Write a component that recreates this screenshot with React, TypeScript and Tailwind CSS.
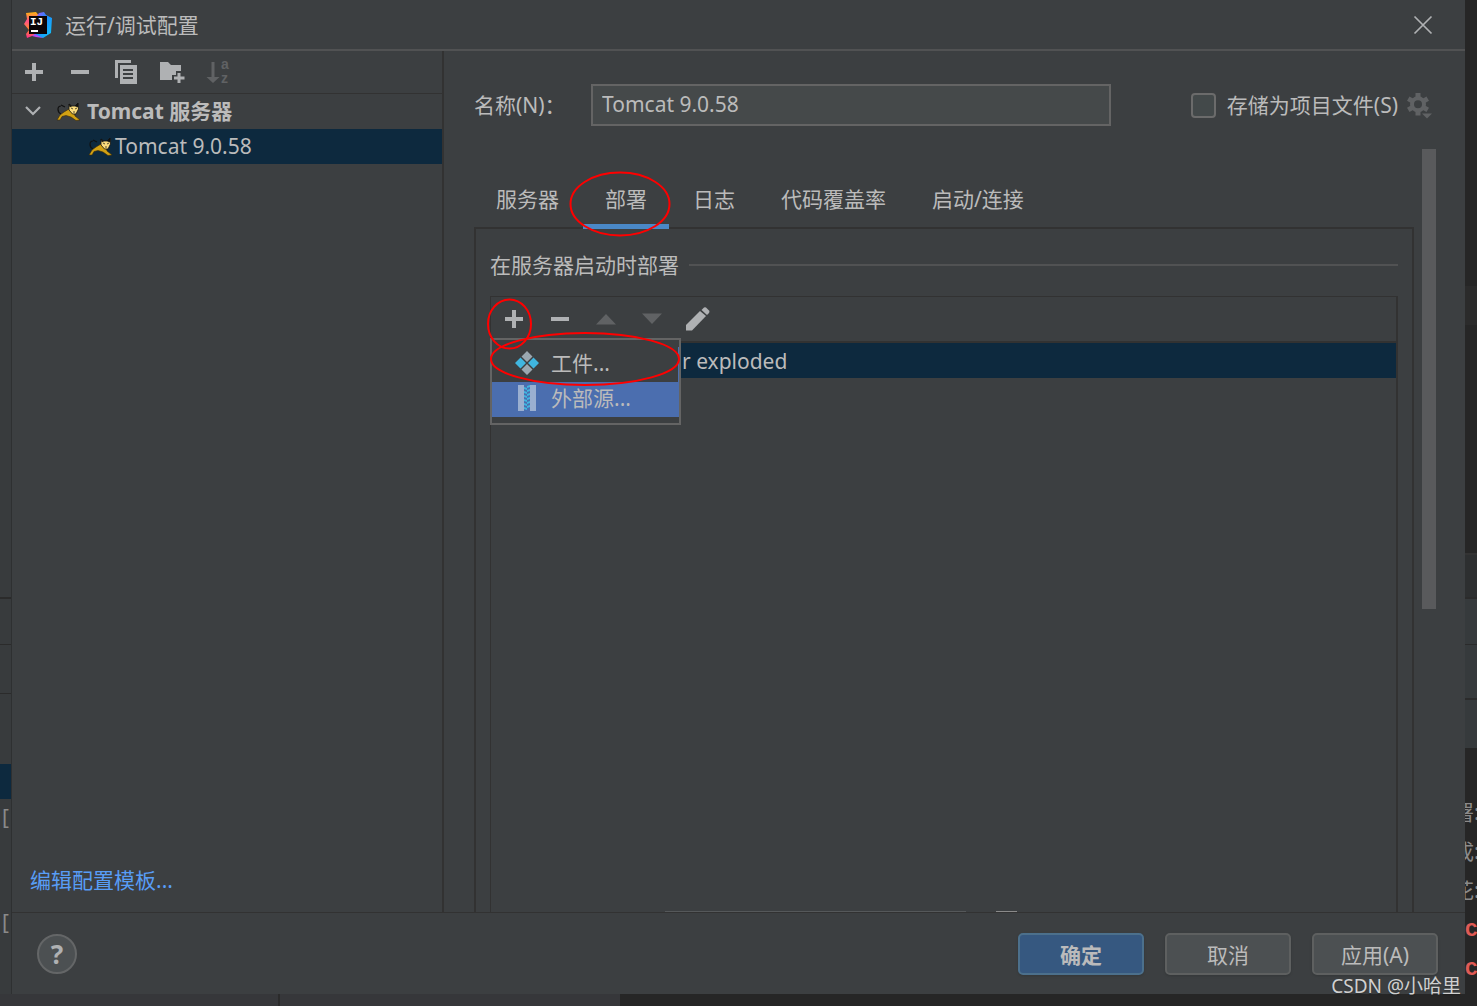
import { useState, type ReactNode } from "react";

const TABS = ["服务器", "部署", "日志", "代码覆盖率", "启动/连接"];

// editor window visible around the dialog
const RIGHT_BANDS = [
  { h: "h-[286px]", cls: "bg-[#262626]" },
  { h: "h-[39px]", cls: "bg-[#2b2b2b]" },
  { h: "h-[228px]", cls: "bg-[#262626]" },
  { h: "h-[44px]", cls: "bg-[#2d2f30] border-t-2 border-[#333333]" },
  { h: "h-[47px]", cls: "bg-[#363a3c] border-t-2 border-[#2b2b2b]" },
  { h: "h-[54px]", cls: "bg-[#363a3c] border-t border-[#2b2b2b]" },
  { h: "h-[50px]", cls: "bg-[#363a3c] border-t-2 border-[#2b2b2b]" },
];

const CONSOLE_LINES = ["署:", "成:", "花:"];

function IdeaLogo() {
  return (
    <svg width="30" height="30" viewBox="0 0 30 30" aria-hidden="true">
      <defs>
        <linearGradient id="warm" x1="0" y1="0" x2="0" y2="1">
          <stop offset="0" stopColor="#fdb60d" />
          <stop offset="0.35" stopColor="#ff4f8a" />
          <stop offset="0.65" stopColor="#ff8a2a" />
          <stop offset="1" stopColor="#fe2d8e" />
        </linearGradient>
        <linearGradient id="cool" x1="0" y1="0" x2="1" y2="1">
          <stop offset="0" stopColor="#b74af7" />
          <stop offset="0.45" stopColor="#1a8dff" />
          <stop offset="1" stopColor="#12c8f5" />
        </linearGradient>
      </defs>
      <path d="M3 3L13 2L17 7L14 25L9 26L4 28L3 24L6 20L1 14L4 9Z" fill="url(#warm)" />
      <path d="M14 6L16 3L21 2L23 5L29 8L28 23L20 28L11 25Z" fill="url(#cool)" />
      <path d="M9 26L12 24L20 28L13 27Z" fill="#b74af7" />
      <rect x="6" y="6" width="18" height="18" fill="#0a0508" />
      <text x="7" y="15" fontSize="11" fontWeight="700" fontFamily="Liberation Mono, monospace" fill="#fff">IJ</text>
      <path d="M8 20h7v2h-7z" fill="#fff" />
    </svg>
  );
}

function TomcatIcon() {
  return (
    <svg width="24" height="20" viewBox="0 0 24 20" className="shrink-0" aria-hidden="true">
      <path d="M5 13C1 11 1 5 5 5M5 4L9 6" fill="none" stroke="#111" strokeWidth="1.200" />
      <path d="M1 19L4 14L8 11L13 8L18 11L19 15L24 19L20 19.500L15 16L10 14.500L6 15.500L4 19Z" fill="#d2a113" stroke="#3c2c08" strokeWidth="0.600" />
      <path d="M13 3L15.500 5H19L22 2L22.500 8L20 13H16.500L13 9Z" fill="#fbdc7c" stroke="#111" strokeWidth="0.800" />
      <path d="M13 3L15.500 5L14 6ZM22 2L19 5L22 6ZM15 7L17 8M19 8L21 7M17 11H19" fill="#111" stroke="#111" strokeWidth="0.700" />
    </svg>
  );
}

function PlusIcon() {
  return (
    <svg width="18" height="18" viewBox="0 0 18 18" aria-hidden="true">
      <path d="M7 0h4v7h7v4h-7v7H7v-7H0V7h7z" fill="#afb1b3" />
    </svg>
  );
}

function MinusIcon() {
  return (
    <svg width="18" height="18" viewBox="0 0 18 18" aria-hidden="true">
      <path d="M0 7h18v4H0z" fill="#afb1b3" />
    </svg>
  );
}

function CopyIcon() {
  return (
    <svg width="24" height="24" viewBox="0 0 24 24" aria-hidden="true">
      <path d="M1 0H17V3H4V18H1Z" fill="#afb1b3" />
      <path d="M6 5H23V24H6ZM9 9V11H19V9ZM9 13V15H19V13ZM9 17V19H19V17Z" fill="#afb1b3" fillRule="evenodd" />
    </svg>
  );
}

function FolderPlusIcon() {
  return (
    <svg width="26" height="22" viewBox="0 0 26 22" aria-hidden="true">
      <path d="M1 1H9L12 4H22V10H17V14H13V19H1Z" fill="#afb1b3" />
      <path d="M18.500 12H21.500V15.500H25.500V18.500H21.500V22H18.500V18.500H15V15.500H18.500Z" fill="#afb1b3" />
    </svg>
  );
}

function SortIcon() {
  return (
    <svg width="24" height="28" viewBox="0 0 24 28" aria-hidden="true">
      <path d="M5.500 4h3v15h5L7 25L0.500 19h5z" fill="#606264" />
      <g fill="#606264" fontSize="14" fontWeight="700" fontFamily="Liberation Sans, sans-serif">
        <text x="15" y="11">a</text>
        <text x="15" y="25">z</text>
      </g>
    </svg>
  );
}

function PencilIcon() {
  return (
    <svg width="24" height="24" viewBox="0 0 24 24" aria-hidden="true">
      <path d="M0 18L14 4L20 9L6 23.500H0Z" fill="#afb1b3" />
      <path d="M15.500 3L18 0.500Q19 0 20 0.500L23 3.500Q24 4.500 23 6L21 8Z" fill="#afb1b3" />
    </svg>
  );
}

function GearIcon() {
  return (
    <svg width="26" height="26" viewBox="0 0 26 26" aria-hidden="true">
      <g fill="#606264">
        <path d="M8.500 0H13.500V5H8.500ZM8.500 17.500H13.500V22.500H8.500Z" />
        <path d="M8.500 0H13.500V5H8.500ZM8.500 17.500H13.500V22.500H8.500Z" transform="rotate(60 11 11.250)" />
        <path d="M8.500 0H13.500V5H8.500ZM8.500 17.500H13.500V22.500H8.500Z" transform="rotate(120 11 11.250)" />
        <path d="M15 20.500H25L20 25.500Z" />
      </g>
      <circle cx="11" cy="11.250" r="6" fill="none" stroke="#606264" strokeWidth="4" />
    </svg>
  );
}

function ArtifactIcon() {
  return (
    <svg width="24" height="24" viewBox="0 0 24 24" className="shrink-0" aria-hidden="true">
      <path d="M12 0L17.500 5.500L12 11L6.500 5.500ZM12 13L17.500 18.500L12 24L6.500 18.500Z" fill="#9aa7b0" />
      <path d="M5.500 6.500L11 12L5.500 17.500L0 12ZM18.500 6.500L24 12L18.500 17.500L13 12Z" fill="#40b6e0" />
    </svg>
  );
}

function ArchiveIcon() {
  return (
    <svg width="24" height="26" viewBox="0 0 24 26" className="shrink-0" aria-hidden="true">
      <path d="M3 0H9V26H3ZM15 0H21V26H15Z" fill="#9aafd0" />
      {[1, 5, 9, 13, 17, 21].map(y => (
        <path key={y} d={`M12 ${y}L15 ${y - 1}V${y + 1}L12 ${y + 2}ZM9 ${y + 1}L12 ${y + 2}V${y + 4}L9 ${y + 3}Z`} fill="#40b6e0" />
      ))}
    </svg>
  );
}

function ToolButton({ label, disabled, children }: { label: string; disabled?: boolean; children: ReactNode }) {
  return (
    <button type="button" aria-label={label} disabled={disabled} className="flex size-[30px] items-center justify-center">
      {children}
    </button>
  );
}

function TitleBar() {
  return (
    <header className="flex h-[51px] items-center border-b-2 border-[#515253] pr-8 pl-[11px]">
      <IdeaLogo />
      <h1 className="ml-3 flex-1">运行/调试配置</h1>
      <button type="button" aria-label="关闭">
        <svg width="20" height="20" viewBox="0 0 20 20">
          <path d="M1.500 1.500L18.500 18.500M18.500 1.500L1.500 18.500" stroke="#afb1b3" strokeWidth="1.700" />
        </svg>
      </button>
    </header>
  );
}

function Sidebar() {
  return (
    <aside className="flex w-[432px] shrink-0 flex-col border-r-2 border-[#323232]">
      <div className="flex h-[43px] items-center gap-4 border-b border-[#323232] pl-[7px]">
        <ToolButton label="添加"><PlusIcon /></ToolButton>
        <ToolButton label="移除"><MinusIcon /></ToolButton>
        <ToolButton label="复制"><CopyIcon /></ToolButton>
        <ToolButton label="新建文件夹"><FolderPlusIcon /></ToolButton>
        <ToolButton label="排序" disabled><SortIcon /></ToolButton>
      </div>
      <ul className="flex-1">
        <li>
          <button type="button" className="flex h-[35px] w-full items-center pb-0.5 pl-3 font-bold">
            <svg width="18" height="12" viewBox="0 0 18 12" aria-hidden="true">
              <path d="M2 2L9 9L16 2" fill="none" stroke="#afb1b3" strokeWidth="2.200" />
            </svg>
            <span className="ml-[14px] flex"><TomcatIcon /></span>
            <span className="ml-[7px]">Tomcat 服务器</span>
          </button>
          <button type="button" className="flex h-[35px] w-full items-center bg-[#0d293e] pb-0.5 pl-[76px]">
            <TomcatIcon />
            <span className="ml-[3px]">Tomcat 9.0.58</span>
          </button>
        </li>
      </ul>
      <a href="#templates" className="mb-[18px] self-start pl-[18px] text-[#589df6]">编辑配置模板...</a>
    </aside>
  );
}

function AddMenu() {
  return (
    <div role="menu" className="absolute top-[41px] -left-px w-[191px] border-2 border-[#646464] bg-[#3c3f41] pt-[7px] pb-1.5">
      <button type="button" role="menuitem" className="flex h-[35px] w-full items-center gap-3 border-r border-[#4b6eaf] pb-[3px] pl-[23px]">
        <ArtifactIcon />工件...
      </button>
      <button type="button" role="menuitem" className="flex h-[35px] w-full items-center gap-3 bg-[#4b6eaf] pb-[3px] pl-[23px]">
        <ArchiveIcon />外部源...
      </button>
      <svg width="192" height="56" viewBox="0 0 192 56" className="pointer-events-none absolute -top-[9px] -left-[2px]" aria-hidden="true">
        <ellipse cx="95" cy="28" rx="94" ry="26" fill="none" stroke="#f00" strokeWidth="2" />
      </svg>
    </div>
  );
}

function DeployPanel() {
  return (
    <section className="flex flex-1 flex-col border-2 border-b-0 border-[#323232] px-[14px] pt-5">
      <div className="flex h-8 items-center gap-[10px]">
        <h2>在服务器启动时部署</h2>
        <div className="h-0.5 flex-1 bg-[#515253]" />
      </div>
      <div className="relative mt-[15px] flex flex-1 flex-col border border-r-2 border-b-0 border-[#323232]">
        <div className="flex h-[46px] items-center gap-4 border-b-2 border-[#323232] pl-2">
          <span className="relative flex">
            <ToolButton label="添加"><PlusIcon /></ToolButton>
            <svg width="46" height="52" viewBox="0 0 46 52" className="pointer-events-none absolute -top-[6px] -left-[12px] z-10 max-w-none" aria-hidden="true">
              <ellipse cx="22.500" cy="26" rx="21.500" ry="24.500" fill="none" stroke="#f00" strokeWidth="2" />
            </svg>
          </span>
          <ToolButton label="移除"><MinusIcon /></ToolButton>
          <ToolButton label="上移" disabled>
            <svg width="20" height="12" viewBox="0 0 20 12"><path d="M0 11.500L10 1L20 11.500Z" fill="#606264" /></svg>
          </ToolButton>
          <ToolButton label="下移" disabled>
            <svg width="20" height="12" viewBox="0 0 20 12"><path d="M0 0.500L10 11L20 0.500Z" fill="#606264" /></svg>
          </ToolButton>
          <ToolButton label="编辑"><PencilIcon /></ToolButton>
        </div>
        <div className="flex h-[35px] items-center bg-[#0d293e] pl-[191px]">r exploded</div>
        <AddMenu />
        {/* top edge of the context field that is scrolled out of view */}
        <div className="mt-auto flex pl-[174px]">
          <div className="h-px w-[301px] bg-[#55585a]" />
          <div className="ml-[30px] h-px w-[21px] bg-[#8a8a8a]" />
        </div>
      </div>
    </section>
  );
}

function Editor() {
  const [tab, setTab] = useState("部署");
  const [name, setName] = useState("Tomcat 9.0.58");

  return (
    <main className="flex flex-1 flex-col pt-[33px] pl-[30px]">
      <div className="flex h-[42px] items-center pr-8">
        <label htmlFor="name" className="w-[117px]">名称(N)：</label>
        <input
          id="name"
          value={name}
          onChange={e => setName(e.target.value)}
          className="h-full min-w-0 flex-1 border-2 border-[#646464] bg-[#45494a] px-[9px] pb-0.5 outline-none"
        />
        <input id="store" type="checkbox" className="ml-20 size-[25px] appearance-none rounded-[4px] border-2 border-[#6b6b6b] bg-[#43494a]" />
        <label htmlFor="store" className="ml-[11px]">存储为项目文件(S)</label>
        <button type="button" aria-label="存储选项" disabled className="ml-[9px] pt-0.5"><GearIcon /></button>
      </div>
      <div className="mt-[23px] flex flex-1 gap-2 pr-[29px]">
        <div className="flex flex-1 flex-col pt-[22px]">
          <div role="tablist" className="-mb-0.5 flex gap-0.5">
            {TABS.map(t => (
              <button
                key={t}
                type="button"
                role="tab"
                aria-selected={t === tab}
                onClick={() => setTab(t)}
                className={`relative h-[58px] border-b-[5px] px-[22px] pt-0.5 ${t === tab ? "border-[#4a88c7]" : "border-transparent"}`}
              >
                {t}
                {t === "部署" && (
                  <svg width="102" height="66" viewBox="0 0 102 66" className="pointer-events-none absolute -left-[14px] top-0 max-w-none" aria-hidden="true">
                    <ellipse cx="51" cy="33" rx="49.500" ry="31.500" fill="none" stroke="#f00" strokeWidth="2" />
                  </svg>
                )}
              </button>
            ))}
          </div>
          <DeployPanel />
        </div>
        <div className="h-[460px] w-[14px] bg-[#595a5c]" />
      </div>
    </main>
  );
}

function Footer() {
  return (
    <footer className="flex h-[82px] items-center gap-[21px] border-t border-[#323232] pr-[27px] pl-[25px]">
      <button type="button" aria-label="帮助" className="mr-auto size-10 rounded-full border-2 border-[#646667] bg-[#4c5052] text-[26px] leading-none font-bold text-[#afb1b3]">?</button>
      <button type="button" className="h-[42px] w-[126px] rounded-[5px] border-2 border-[#4c708c] bg-[#365880] pt-0.5 font-bold shadow">确定</button>
      <button type="button" className="h-[42px] w-[126px] rounded-[5px] border-2 border-[#5e6060] bg-[#4c5052] pt-0.5 shadow">取消</button>
      <button type="button" className="h-[42px] w-[126px] rounded-[5px] border-2 border-[#5e6060] bg-[#4c5052] pt-0.5 shadow">应用(A)</button>
    </footer>
  );
}

export default function App() {
  return (
    <div className="relative flex min-h-screen flex-col overflow-hidden bg-[#262626] font-['Noto_Sans','Noto_Sans_CJK_SC',sans-serif] text-[21px] leading-7 text-[#bbbbbb]">
      <div className="flex flex-1">
        <div className="flex w-3 shrink-0 flex-col overflow-hidden border-r border-[#2e3031] bg-[#383b3d] text-[#8a8a8a]">
          <div className="h-[599px] border-b-2 border-[#2b2b2b]" />
          <div className="h-[46px] border-b border-[#2b2b2b]" />
          <div className="h-[49px] border-b border-[#2b2b2b]" />
          <div className="mt-[70px] h-[35px] bg-[#0d293e]" />
          <div className="mt-1 pl-0.5">[</div>
          <div className="mt-[77px] pl-0.5">[</div>
        </div>
        <div className="flex min-w-0 flex-1 flex-col bg-[#3c3f41]">
          <TitleBar />
          <div className="flex flex-1">
            <Sidebar />
            <Editor />
          </div>
          <Footer />
        </div>
        <div className="flex w-3 shrink-0 flex-col overflow-hidden">
          {RIGHT_BANDS.map((b, i) => <div key={i} className={`shrink-0 ${b.h} ${b.cls}`} />)}
          <div className="mt-[50px] flex flex-col">
            {CONSOLE_LINES.map(l => (
              <div key={l} className="-ml-[12px] h-[39px] whitespace-nowrap text-[#8a8a8a]">{l}</div>
            ))}
            <div className="h-[39px] pt-0.5 font-['Liberation_Mono',monospace] font-bold text-[#e05a55]">C</div>
            <div className="h-[39px] pt-0.5 font-['Liberation_Mono',monospace] font-bold text-[#e05a55]">C</div>
          </div>
        </div>
      </div>
      <div className="flex h-3">
        <div className="w-[280px] border-r-2 border-[#2b2b2b] bg-[#36373a]" />
        <div className="w-[340px] bg-[#36373a]" />
      </div>
      <div className="absolute right-4 bottom-1.5 text-[19px] leading-7 text-[#d0d0d0] text-shadow-sm">CSDN @小哈里</div>
    </div>
  );
}
